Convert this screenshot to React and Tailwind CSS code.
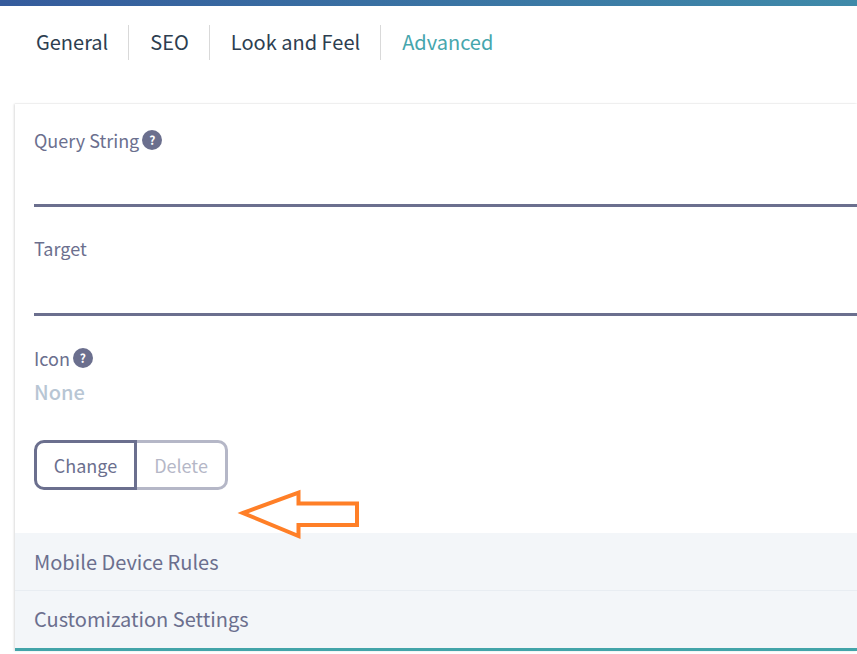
function Help() {
  return (
    <span className="ml-[3px] inline-flex h-[20px] w-[20px] items-center justify-center rounded-full bg-[#6b6f8e] text-[12px] leading-none font-bold text-white">
      ?
    </span>
  );
}

function Tab({ label, active, last }) {
  return (
    <div className={`flex h-[35px] items-center pb-[1px] pl-[21px] pr-[20px] ${last ? "" : "border-r border-[#d9d9d9]"}`}>
      <span className={`text-[20px] leading-[34px] ${active ? "text-[#46a6ad]" : "text-[#2d3e50]"}`}>{label}</span>
    </div>
  );
}

export default function App() {
  return (
    <div className="relative h-[654px] w-[857px] overflow-hidden bg-white font-['Noto_Sans_CJK_SC','Source_Sans_Pro',sans-serif]">
      <div className="h-[6px] bg-gradient-to-r from-[#355b9c] to-[#3f8aa9]" />
      <div className="ml-[15px] mt-[19px] flex">
        <Tab label="General" />
        <Tab label="SEO" />
        <Tab label="Look and Feel" />
        <Tab label="Advanced" active last />
      </div>
      <div className="ml-[15px] mt-[44px] shadow-[-1px_0_2px_rgba(0,0,0,0.14),0_-1px_1px_rgba(0,0,0,0.02)]">
        <div className="bg-white px-[19px]">
          <div className="mr-[-19px] flex h-[103px] flex-col border-b-[3px] border-[#6b6f8e] pt-[24px]">
            <div className="flex h-[24px] items-center text-[18px] leading-[24px] text-[#6b6f8e]">
              Query String
              <Help />
            </div>
          </div>
          <div className="mr-[-19px] flex h-[109px] flex-col border-b-[3px] border-[#6b6f8e] pt-[29px]">
            <div className="h-[24px] text-[18px] leading-[24px] text-[#6b6f8e]">Target</div>
          </div>
          <div className="flex h-[217px] flex-col pt-[30px]">
            <div className="flex h-[24px] items-center text-[18px] leading-[24px] text-[#6b6f8e]">
              Icon
              <Help />
            </div>
            <div className="mt-[9px] h-[26px] text-[20px] leading-[26px] font-medium text-[#b8c6d4]">None</div>
            <div className="mt-[35px] flex h-[50px]">
              <div className="flex w-[103px] items-center justify-center rounded-l-[10px] border-[3px] border-[#6b6f8e] text-[18px] text-[#6b6f8e]">
                Change
              </div>
              <div className="flex w-[91px] items-center justify-center rounded-r-[10px] border-[3px] border-l-0 border-[#b5b7c7] text-[18px] text-[#b5b7c7]">
                Delete
              </div>
            </div>
          </div>
        </div>
        <div className="flex h-[58px] items-center border-b border-[#e8edf2] bg-[#f3f6f9] px-[19px] text-[20px] text-[#6b6f8e]">
          Mobile Device Rules
        </div>
        <div className="flex h-[57px] items-center bg-[#f3f6f9] px-[19px] pb-[2px] text-[20px] text-[#6b6f8e]">
          Customization Settings
        </div>
        <div className="h-[3px] bg-[#42a4a9]" />
      </div>
      <svg className="absolute left-0 top-0" width="857" height="654" fill="none">
        <path
          d="M243 513 L298.5 492.5 L298.5 503.5 L357 503.5 L357 525 L298.5 525 L298.5 536 Z"
          stroke="#ff7f27"
          strokeWidth="4"
        />
      </svg>
    </div>
  );
}
